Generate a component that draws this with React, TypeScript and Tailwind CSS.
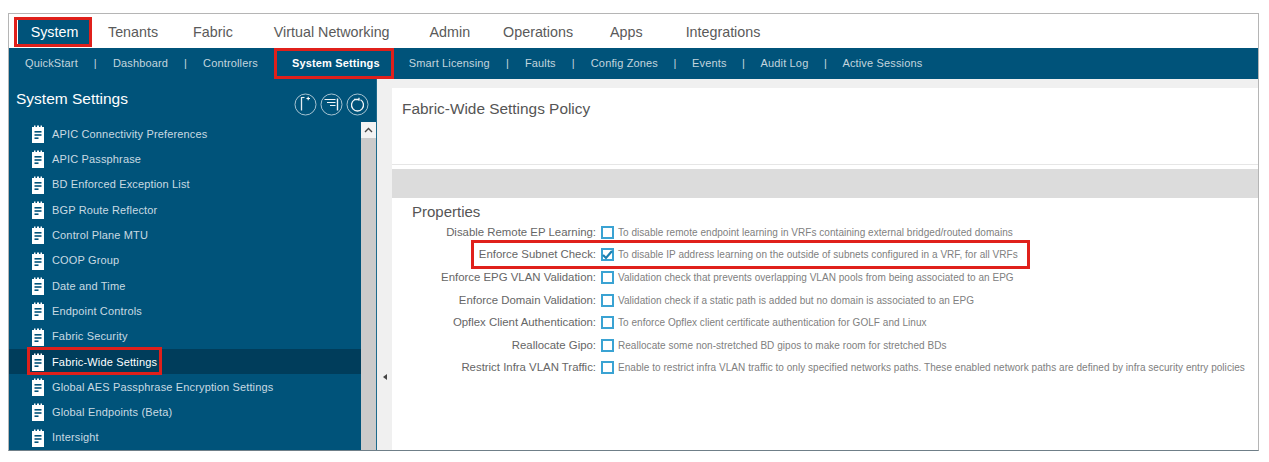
const tabs = [
  ["Tenants", "ml-[17px]"],
  ["Fabric", "ml-[35px]"],
  ["Virtual Networking", "ml-[41px]"],
  ["Admin", "ml-[40px]"],
  ["Operations", "ml-[33px]"],
  ["Apps", "ml-[37px]"],
  ["Integrations", "ml-[43px]"],
];

const sideItems = [
  "APIC Connectivity Preferences",
  "APIC Passphrase",
  "BD Enforced Exception List",
  "BGP Route Reflector",
  "Control Plane MTU",
  "COOP Group",
  "Date and Time",
  "Endpoint Controls",
  "Fabric Security",
  "Fabric-Wide Settings",
  "Global AES Passphrase Encryption Settings",
  "Global Endpoints (Beta)",
  "Intersight",
];

const props: [string, string, boolean][] = [
  ["Disable Remote EP Learning:", "To disable remote endpoint learning in VRFs containing external bridged/routed domains", false],
  ["Enforce Subnet Check:", "To disable IP address learning on the outside of subnets configured in a VRF, for all VRFs", true],
  ["Enforce EPG VLAN Validation:", "Validation check that prevents overlapping VLAN pools from being associated to an EPG", false],
  ["Enforce Domain Validation:", "Validation check if a static path is added but no domain is associated to an EPG", false],
  ["Opflex Client Authentication:", "To enforce Opflex client certificate authentication for GOLF and Linux", false],
  ["Reallocate Gipo:", "Reallocate some non-stretched BD gipos to make room for stretched BDs", false],
  ["Restrict Infra VLAN Traffic:", "Enable to restrict infra VLAN traffic to only specified networks paths. These enabled network paths are defined by infra security entry policies", false],
];

function DocIcon() {
  return (
    <svg width="12" height="18" viewBox="0 0 12 18" className="shrink-0">
      <path d="M0 2h2V0.5h1.5V2h1.5V0.5h2V2h1.5V0.5H10V2h2v16H0z" fill="#ffffff" />
      <rect x="2.5" y="6" width="7" height="1.6" fill="#00537a" />
      <rect x="2.5" y="9.2" width="7" height="1.6" fill="#00537a" />
      <rect x="2.5" y="12.4" width="4" height="1.6" fill="#00537a" />
    </svg>
  );
}

function CircleIcon({ kind }: { kind: number }) {
  return (
    <svg width="23" height="23" viewBox="0 0 23 23" className="shrink-0" fill="none" stroke="#b9cfda">
      <circle cx="11.5" cy="11.5" r="10.5" strokeWidth="0.9" />
      {kind === 0 && (
        <g strokeWidth="1.1">
          <path d="M7.5 4v13.5" strokeWidth="1.3" stroke="#e6eef2" />
          <path d="M7.5 4.5h3" stroke="#e6eef2" />
          <path d="M12.5 5.5h3.5M14.2 3.8v3.4" stroke="#ffffff" />
        </g>
      )}
      {kind === 1 && (
        <g strokeWidth="1.2" stroke="#f0f5f7">
          <path d="M4.5 6.5h11M7 9.5h8.5M10 12.5h5.5" />
          <path d="M17.5 5.5v12" strokeWidth="1.4" />
        </g>
      )}
      {kind === 2 && (
        <g strokeWidth="1.3" stroke="#f0f5f7">
          <path d="M8.5 6.8a6 6 0 1 0 6 0" />
          <path d="M8 6.5h5M13 4.8v3" />
        </g>
      )}
    </svg>
  );
}

function Sep({ tight }: { tight?: boolean }) {
  return <span className={`${tight ? "mx-[15.5px]" : "mx-[16px]"} text-[#c4d6df]`}>|</span>;
}

export default function App() {
  return (
    <div className="w-[1269px] h-[462px] bg-white pl-[8px] pr-[10px] pt-[13px] pb-[11px] overflow-hidden font-['Liberation_Sans',Arial,sans-serif]">
      <div className="relative w-full h-full border border-[#b5b5b5] border-b-[#6f7f88] flex flex-col overflow-hidden bg-white">
        {/* Top tabs */}
        <div className="h-[34px] shrink-0 flex items-center pl-[9px] pt-[4px] text-[14.3px] text-[#5a5a5a]">
          <div className="h-[26px] w-[73px] bg-[#00537a] text-white flex items-center justify-center">System</div>
          {tabs.map(([t, m]) => (
            <span key={t} className={m}>{t}</span>
          ))}
        </div>

        {/* Sub nav */}
        <div className="h-[31px] shrink-0 bg-[#00537a] flex items-center pl-[16px] text-[11px] text-[#c3d5de] tracking-[0.15px]">
          <span>QuickStart</span>
          <Sep />
          <span>Dashboard</span>
          <Sep />
          <span>Controllers</span>
          <span className="ml-[34px] font-bold text-white">System Settings</span>
          <span className="ml-[29px]">Smart Licensing</span>
          <Sep />
          <span>Faults</span>
          <Sep />
          <span>Config Zones</span>
          <Sep tight />
          <span>Events</span>
          <Sep tight />
          <span>Audit Log</span>
          <Sep tight />
          <span>Active Sessions</span>
        </div>

        {/* Body */}
        <div className="flex-1 flex min-h-0">
          {/* Sidebar */}
          <div className="w-[367px] shrink-0 bg-[#00537a] flex flex-col">
            <div className="h-[42.5px] shrink-0 flex items-center justify-between pl-[7px] pr-[7px]">
              <span className="text-[15.5px] text-white mb-[3px]">System Settings</span>
              <div className="flex gap-[3px] mt-[9px]">
                <CircleIcon kind={0} />
                <CircleIcon kind={1} />
                <CircleIcon kind={2} />
              </div>
            </div>
            <div className="flex-1 flex min-h-0">
              <div className="w-[352px] shrink-0 overflow-hidden">
                {sideItems.map((s) => {
                  const active = s === "Fabric-Wide Settings";
                  return (
                    <div
                      key={s}
                      className={`h-[25.3px] flex items-center pl-[23px] gap-[8px] text-[11px] ${
                        active ? "bg-[#003d5b] text-white" : "text-[#c9dae2]"
                      }`}
                    >
                      <DocIcon />
                      <span className="tracking-[0.15px]">{s}</span>
                    </div>
                  );
                })}
              </div>
              <div className="w-[15px] shrink-0 bg-[#cbcbcb] flex flex-col">
                <div className="h-[16px] bg-[#f3f3f3] flex items-center justify-center">
                  <svg width="9" height="6" viewBox="0 0 9 6" fill="none" stroke="#444" strokeWidth="1.4">
                    <path d="M1 5l3.5-3.5L8 5" />
                  </svg>
                </div>
              </div>
            </div>
          </div>

          {/* Gutter */}
          <div className="w-[16px] shrink-0 bg-[#f0f0f0] border-l border-[#1c6a8c] flex justify-center pt-[295px]">
            <span className="w-0 h-0 border-y-[3px] border-y-transparent border-r-[4px] border-r-[#444]" />
          </div>

          {/* Content */}
          <div className="flex-1 min-w-0 flex flex-col">
            <div className="h-[9px] shrink-0 bg-[#f0f0f0]" />
            <div className="h-[77px] shrink-0 pl-[10px] pt-[9px] text-[15.4px] text-[#555] border-b border-[#e6e6e6]">
              Fabric-Wide Settings Policy
            </div>
            <div className="h-[4px] shrink-0" />
            <div className="h-[29px] shrink-0 bg-[#dcdcdc]" />
            <div className="pl-[20px] pt-[4px] text-[15px] leading-[19px] text-[#555]">Properties</div>
            <div className="flex flex-col">
              {props.map(([label, desc, checked]) => (
                <div key={label} className="h-[22.6px] flex items-center">
                  <span className="w-[204px] shrink-0 text-right text-[11.4px] text-[#666] whitespace-nowrap">{label}</span>
                  <span className="ml-[5px] w-[13px] h-[13px] shrink-0 border-2 border-[#3aa3d3] bg-white flex items-center justify-center">
                    {checked && (
                      <svg width="11" height="10" viewBox="0 0 11 10" fill="none" stroke="#1c7fb0" strokeWidth="2.2" className="shrink-0">
                        <path d="M1 5l3 3L10 1" />
                      </svg>
                    )}
                  </span>
                  <span className="ml-[4px] text-[10px] text-[#808080] tracking-[0.04px] whitespace-nowrap">{desc}</span>
                </div>
              ))}
            </div>
          </div>
        </div>

        {/* Red annotation boxes */}
        <div className="absolute left-[5px] top-[3px] w-[78px] h-[30px] border-[3px] border-[#e0201b]" />
        <div className="absolute left-[265px] top-[34px] w-[120px] h-[31px] border-[3px] border-[#e0201b]" />
        <div className="absolute left-[18px] top-[333px] w-[135px] h-[28px] border-[3px] border-[#e0201b]" />
        <div className="absolute left-[462px] top-[226px] w-[559px] h-[29px] border-[3px] border-[#e0201b]" />
      </div>
    </div>
  );
}
